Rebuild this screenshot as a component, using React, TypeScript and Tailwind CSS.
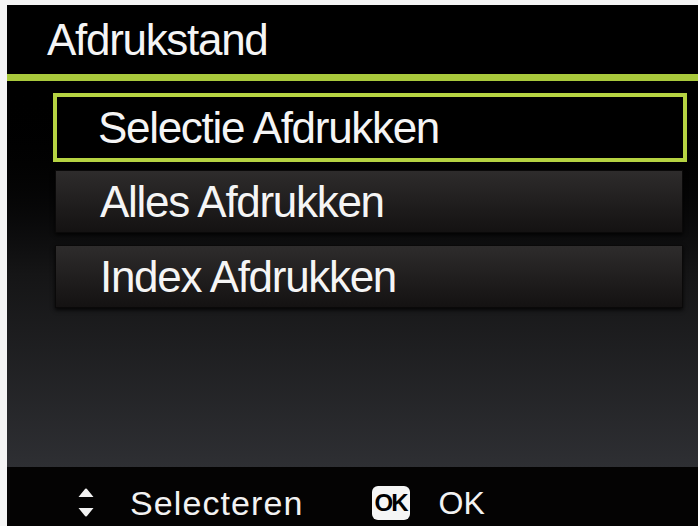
const ITEMS = ['Selectie Afdrukken', 'Alles Afdrukken', 'Index Afdrukken']

function UpDownIcon() {
  return (
    <svg width="16" height="29" viewBox="0 0 16 29" className="shrink-0">
      <path d="M8 0.5 C8.6 0.5 9 0.9 9.4 1.4 L15.5 9 L0.5 9 L6.6 1.4 C7 0.9 7.4 0.5 8 0.5 Z" fill="#f2f2f2" />
      <path d="M0.5 20 L15.5 20 L9.4 27.6 C9 28.1 8.6 28.5 8 28.5 C7.4 28.5 7 28.1 6.6 27.6 Z" fill="#f2f2f2" />
    </svg>
  )
}

export default function App() {
  const selected = 0

  return (
    <div className="w-[698px] h-[526px] overflow-hidden bg-[#f4f4f4] pl-[7px] pt-[5px] font-['Liberation_Sans',Arial,sans-serif]">
      <div className="h-full flex flex-col bg-black">
        {/* title bar */}
        <div className="h-[69px] flex items-center pl-[40px] text-[44px] leading-none tracking-[-1.3px] text-[#f5f5f5]">
          Afdrukstand
        </div>
        <div className="h-[7px] bg-[#a9c93c]" />

        {/* menu */}
        <div className="h-[386px] bg-gradient-to-b from-[#000000] via-[#151516] to-[#2e2f33] pt-[12px] pl-[46px] pr-[11px]">
          {ITEMS.map((label, i) =>
            i === selected ? (
              <div
                key={label}
                className="h-[69px] flex items-center border-[4px] border-[#b6d342] bg-black pl-[41px] text-[44px] leading-none tracking-[-1.3px] text-[#f5f5f5]"
              >
                {label}
              </div>
            ) : (
              <div
                key={label}
                className={`h-[63px] ml-[2px] mr-[4px] flex items-center border border-[#0a0909] bg-gradient-to-b from-[#2e2c2c] to-[#141212] shadow-[0_2px_4px_rgba(0,0,0,0.85)] pl-[44px] text-[44px] leading-none tracking-[-1.3px] text-[#f5f5f5] ${i === 1 ? 'mt-[8px]' : 'mt-[12px]'}`}
              >
                {label}
              </div>
            )
          )}
        </div>

        {/* hint bar */}
        <div className="h-[59px] bg-[#040303] flex items-center pt-[12px] pl-[71px] text-[#f2f2f2]">
          <UpDownIcon />
          <span className="ml-[36px] text-[34px] leading-none tracking-[1.1px]">Selecteren</span>
          <span className="ml-[68px] w-[38px] h-[34px] rounded-[6px] bg-[#f5f5f5] flex items-center justify-center text-[24px] font-bold leading-none text-black tracking-[-2px]">
            OK
          </span>
          <span className="ml-[29px] text-[32px] leading-none">OK</span>
        </div>
      </div>
    </div>
  )
}
